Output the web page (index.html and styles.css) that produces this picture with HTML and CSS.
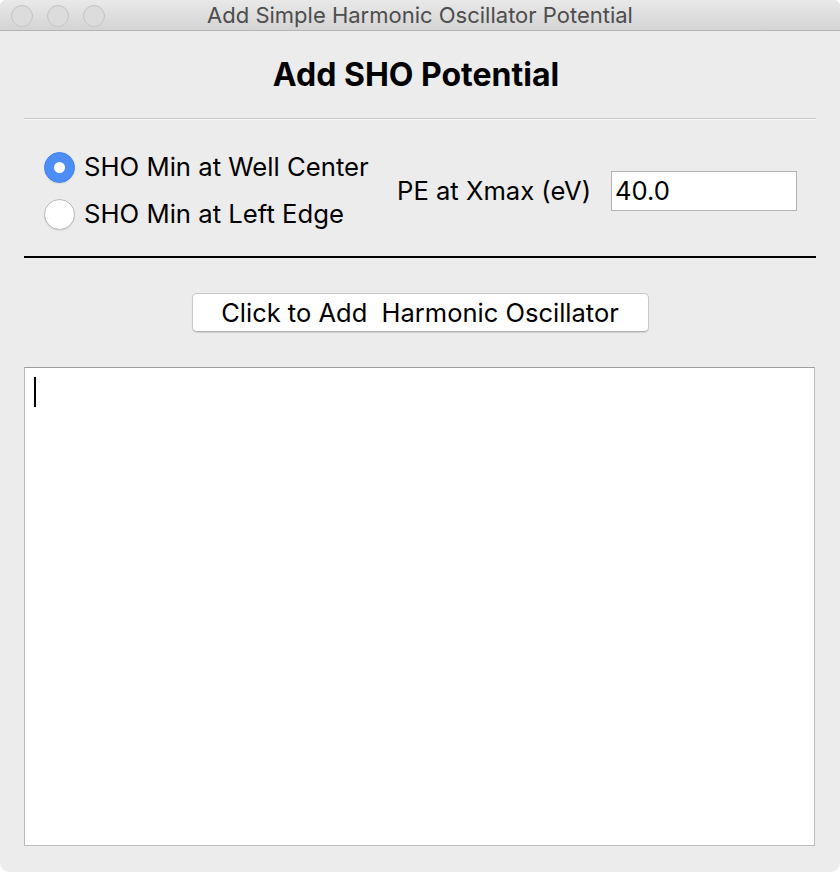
FILE: index.html
```html
<!DOCTYPE html>
<html>
<head>
<meta charset="utf-8">
<link rel="stylesheet" href="styles.css">
</head>
<body>
<div class="window">
  <div class="titlebar">
    <div class="lights">
      <span class="light"></span>
      <span class="light"></span>
      <span class="light"></span>
    </div>
    <div class="title">Add Simple Harmonic Oscillator Potential</div>
  </div>
  <div class="content">
    <h1 class="heading">Add SHO Potential</h1>
    <div class="sep-light"></div>
    <div class="options">
      <div class="radios">
        <label class="radio-row"><span class="radio checked"></span><span class="radio-label">SHO Min at Well Center</span></label>
        <label class="radio-row"><span class="radio"></span><span class="radio-label">SHO Min at Left Edge</span></label>
      </div>
      <div class="pe">
        <span class="pe-label">PE at Xmax (eV)</span>
        <div class="field">40.0</div>
      </div>
    </div>
    <div class="sep-dark"></div>
    <div class="btn-row">
      <button class="btn">Click to Add&nbsp; Harmonic Oscillator</button>
    </div>
    <div class="textarea"><span class="caret"></span></div>
  </div>
</div>
</body>
</html>
```

FILE: styles.css
```css
html, body {
  margin: 0;
  padding: 0;
  background: #ffffff;
}
.window {
  width: 840px;
  height: 872px;
  background: #ececec;
  border-radius: 6px 6px 9px 9px;
  overflow: hidden;
  font-family: Inter, "Liberation Sans", sans-serif;
  color: #000;
}
.titlebar {
  position: relative;
  height: 30px;
  border-bottom: 1px solid #b4b4b4;
  background: linear-gradient(#e9e9e9, #d4d4d4);
  display: flex;
  align-items: center;
  justify-content: center;
}
.lights {
  position: absolute;
  left: 11px;
  top: 5px;
  display: flex;
  gap: 14px;
}
.light {
  width: 20px;
  height: 20px;
  border-radius: 50%;
  background: #dcdcdc;
  border: 1px solid #c3c3c3;
}
.title {
  font-size: 22px;
  color: #4d4d4d;
  line-height: 30px;
}
.content {
  padding: 0 24px;
}
.heading {
  margin: 0;
  padding-top: 28px;
  padding-right: 8px;
  height: 32px;
  line-height: 32px;
  font-size: 32px;
  font-weight: 700;
  text-align: center;
  margin-bottom: 27px;
}
.sep-light {
  height: 1px;
  background: #c8c8c8;
  border-bottom: 1px solid #f8f8f8;
}
.options {
  display: flex;
  align-items: center;
  padding-top: 31px;
  padding-bottom: 26px;
}
.radios {
  margin-left: 20px;
  display: flex;
  flex-direction: column;
  gap: 15px;
}
.radio-row {
  display: flex;
  align-items: center;
  gap: 9px;
  height: 32px;
}
.radio {
  box-sizing: border-box;
  width: 31px;
  height: 31px;
  border-radius: 50%;
  background: #ffffff;
  border: 1px solid #b9b9b9;
  box-shadow: 0 1px 1px rgba(0,0,0,0.08);
  display: flex;
  align-items: center;
  justify-content: center;
}
.radio.checked {
  background: #4c8ef5;
  border-color: #4284f0;
}
.radio.checked::after {
  content: "";
  width: 11px;
  height: 11px;
  border-radius: 50%;
  background: #ffffff;
}
.radio-label {
  font-size: 25.7px;
  line-height: 32px;
}
.pe {
  margin-left: auto;
  margin-right: 19px;
  display: flex;
  align-items: center;
  gap: 20px;
}
.pe-label {
  font-size: 25.6px;
}
.field {
  box-sizing: border-box;
  width: 186px;
  height: 40px;
  background: #ffffff;
  border: 1px solid #b3b3b3;
  font-size: 25.6px;
  line-height: 38px;
  padding-left: 3px;
}
.sep-dark {
  height: 2px;
  background: #000000;
}
.btn-row {
  display: flex;
  justify-content: center;
  padding-top: 35px;
}
.btn {
  box-sizing: border-box;
  width: 457px;
  height: 39px;
  background: #ffffff;
  border: 1px solid #c9c9c9;
  border-bottom-color: #b0b0b0;
  border-radius: 5px;
  box-shadow: 0 1px 1px rgba(0,0,0,0.12);
  font-family: Inter, "Liberation Sans", sans-serif;
  font-size: 25.5px;
  color: #000;
  padding: 0;
}
.textarea {
  box-sizing: border-box;
  margin-top: 35px;
  width: 791px;
  height: 479px;
  background: #ffffff;
  border: 1px solid #bcbcbc;
  border-top-color: #9e9e9e;
  padding: 9px 0 0 9px;
}
.caret {
  display: block;
  width: 2px;
  height: 30px;
  background: #000;
}
```
